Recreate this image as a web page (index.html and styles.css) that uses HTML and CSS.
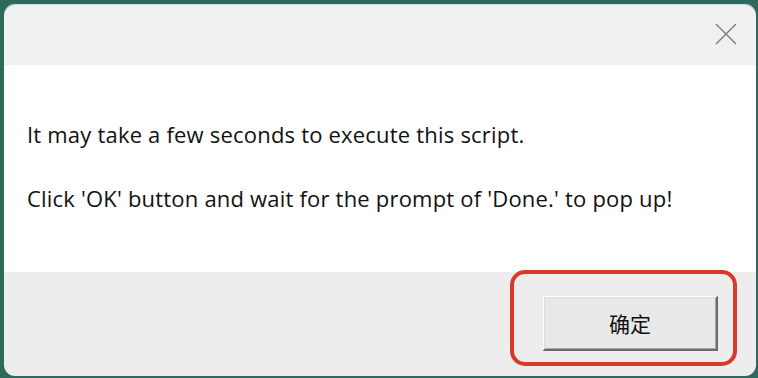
FILE: index.html
```html
<!DOCTYPE html>
<html lang="en">
<head>
    <meta charset="UTF-8">
    <title>Message</title>
    <link rel="stylesheet" href="styles.css">
</head>
<body>
    <div class="dialog">
        <div class="titlebar">
            <svg class="close" width="22" height="22" viewBox="0 0 22 22">
                <path d="M1 1 L21 21 M21 1 L1 21" stroke="#7b7b7b" stroke-width="1.4" fill="none"/>
            </svg>
        </div>
        <div class="content">
            <p>It may take a few seconds to execute this script.</p>
            <p>Click 'OK' button and wait for the prompt of 'Done.' to pop up!</p>
        </div>
        <div class="footer">
            <button type="button" class="ok">确定</button>
            <div class="mark"></div>
        </div>
    </div>
</body>
</html>
```

FILE: styles.css
```css
html, body {
    margin: 0;
    height: 100%;
    overflow: hidden;
}
body {
    background-color: #2d6a5d;
    font-family: "Open Sans", "Noto Sans", sans-serif;
}
.dialog {
    margin: 5px 2px 0 4px;
    height: 371px;
    border-radius: 11px;
    overflow: hidden;
    box-shadow: 0 -1px 0 #cfe6df;
    display: flex;
    flex-direction: column;
}
.titlebar {
    height: 60px;
    background-color: #f0f0f0;
    display: flex;
    justify-content: flex-end;
    align-items: flex-start;
    padding-right: 19px;
    box-sizing: border-box;
}
.close {
    margin-top: 18px;
}
.content {
    height: 207px;
    background-color: #ffffff;
    padding: 54px 0 0 23px;
    box-sizing: border-box;
}
.content p {
    margin: 0 0 34px 0;
    font-size: 22px;
    line-height: 30px;
    letter-spacing: 0.2px;
    color: #111;
}
.footer {
    flex: 1;
    background-color: #ededed;
    position: relative;
    display: flex;
    justify-content: flex-end;
    padding: 24px 38px 0 0;
}
.ok {
    width: 175px;
    height: 55px;
    background-color: #e8e8e8;
    border-style: solid;
    border-width: 1px 2px 2px 1px;
    border-color: #ffffff #6a6a6a #6a6a6a #ffffff;
    box-shadow: inset 1px 1px 0 #dcdcdc, inset -1px -1px 0 #a8a8a8;
    font-family: "Noto Sans CJK SC", sans-serif;
    font-size: 21px;
    color: #111;
    padding: 0;
}
.mark {
    position: absolute;
    left: 506px;
    top: -2px;
    width: 219px;
    height: 88px;
    border: 4px solid #d9392b;
    border-radius: 15px;
}
```
